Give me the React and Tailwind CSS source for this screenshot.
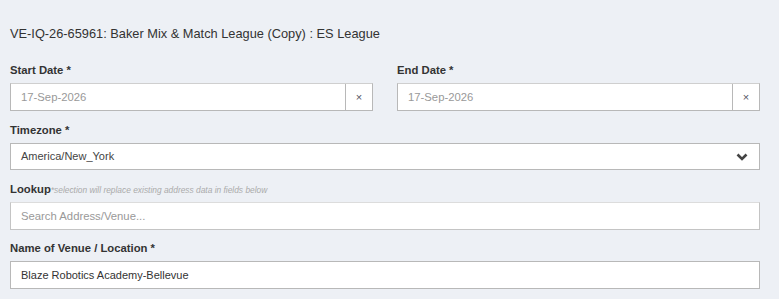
import React from "react";

const font = { fontFamily: '"Liberation Sans", Arial, sans-serif' };

function Label({ children }) {
  return (
    <div className="h-[16px] leading-[16px] mb-[5px] text-[11.3px] font-bold text-[#333]">{children}</div>
  );
}

function DateField({ label, value }) {
  return (
    <div className="flex-1 min-w-0">
      <Label>{label}</Label>
      <div className="flex h-[28px] bg-white border border-[#b8b8b8] border-t-[#cfcfcf]">
        <div className="flex-1 flex items-center pl-[10px] text-[11.3px] text-[#999]">{value}</div>
        <div className="w-[27px] flex items-center justify-center border-l border-[#b8b8b8] text-[11px] text-[#556]">×</div>
      </div>
    </div>
  );
}

export default function App() {
  return (
    <div style={font} className="w-[779px] h-[299px] bg-[#edf0f5] overflow-hidden">
      <div className="w-[750px] ml-[10px] pt-[24px]">
        <div className="h-[20px] leading-[20px] text-[12.8px] text-[#333] mb-[18px]">
          VE-IQ-26-65961: Baker Mix &amp; Match League (Copy) : ES League
        </div>
        <div className="flex gap-[24px]">
          <DateField label="Start Date *" value="17-Sep-2026" />
          <DateField label="End Date *" value="17-Sep-2026" />
        </div>
        <div className="mt-[11px]">
          <Label>Timezone *</Label>
          <div className="flex items-center justify-between h-[27px] bg-white border border-[#b8b8b8] pl-[10px] pr-[11px] text-[11px] text-[#444]">
            <span>America/New_York</span>
            <svg width="12" height="8" viewBox="0 0 12 8">
              <path d="M1.5 1.5 L6 6 L10.5 1.5" fill="none" stroke="#444" strokeWidth="2.6" strokeLinejoin="miter" />
            </svg>
          </div>
        </div>
        <div className="mt-[11px]">
          <div className="h-[16px] leading-[16px] mb-[5px] flex items-baseline">
            <span className="text-[11.3px] font-bold text-[#333]">Lookup</span>
            <span className="text-[8.4px] italic text-[#aaa]">*selection will replace existing address data in fields below</span>
          </div>
          <div className="flex items-center h-[28px] bg-white border border-[#c4c4c4] border-t-[#dcdcdc] pl-[10px] text-[11.3px] text-[#999]">
            Search Address/Venue...
          </div>
        </div>
        <div className="mt-[10px]">
          <Label>Name of Venue / Location *</Label>
          <div className="flex items-center h-[28px] bg-white border border-[#b8b8b8] pl-[10px] text-[11px] text-[#333]">
            Blaze Robotics Academy-Bellevue
          </div>
        </div>
      </div>
    </div>
  );
}
